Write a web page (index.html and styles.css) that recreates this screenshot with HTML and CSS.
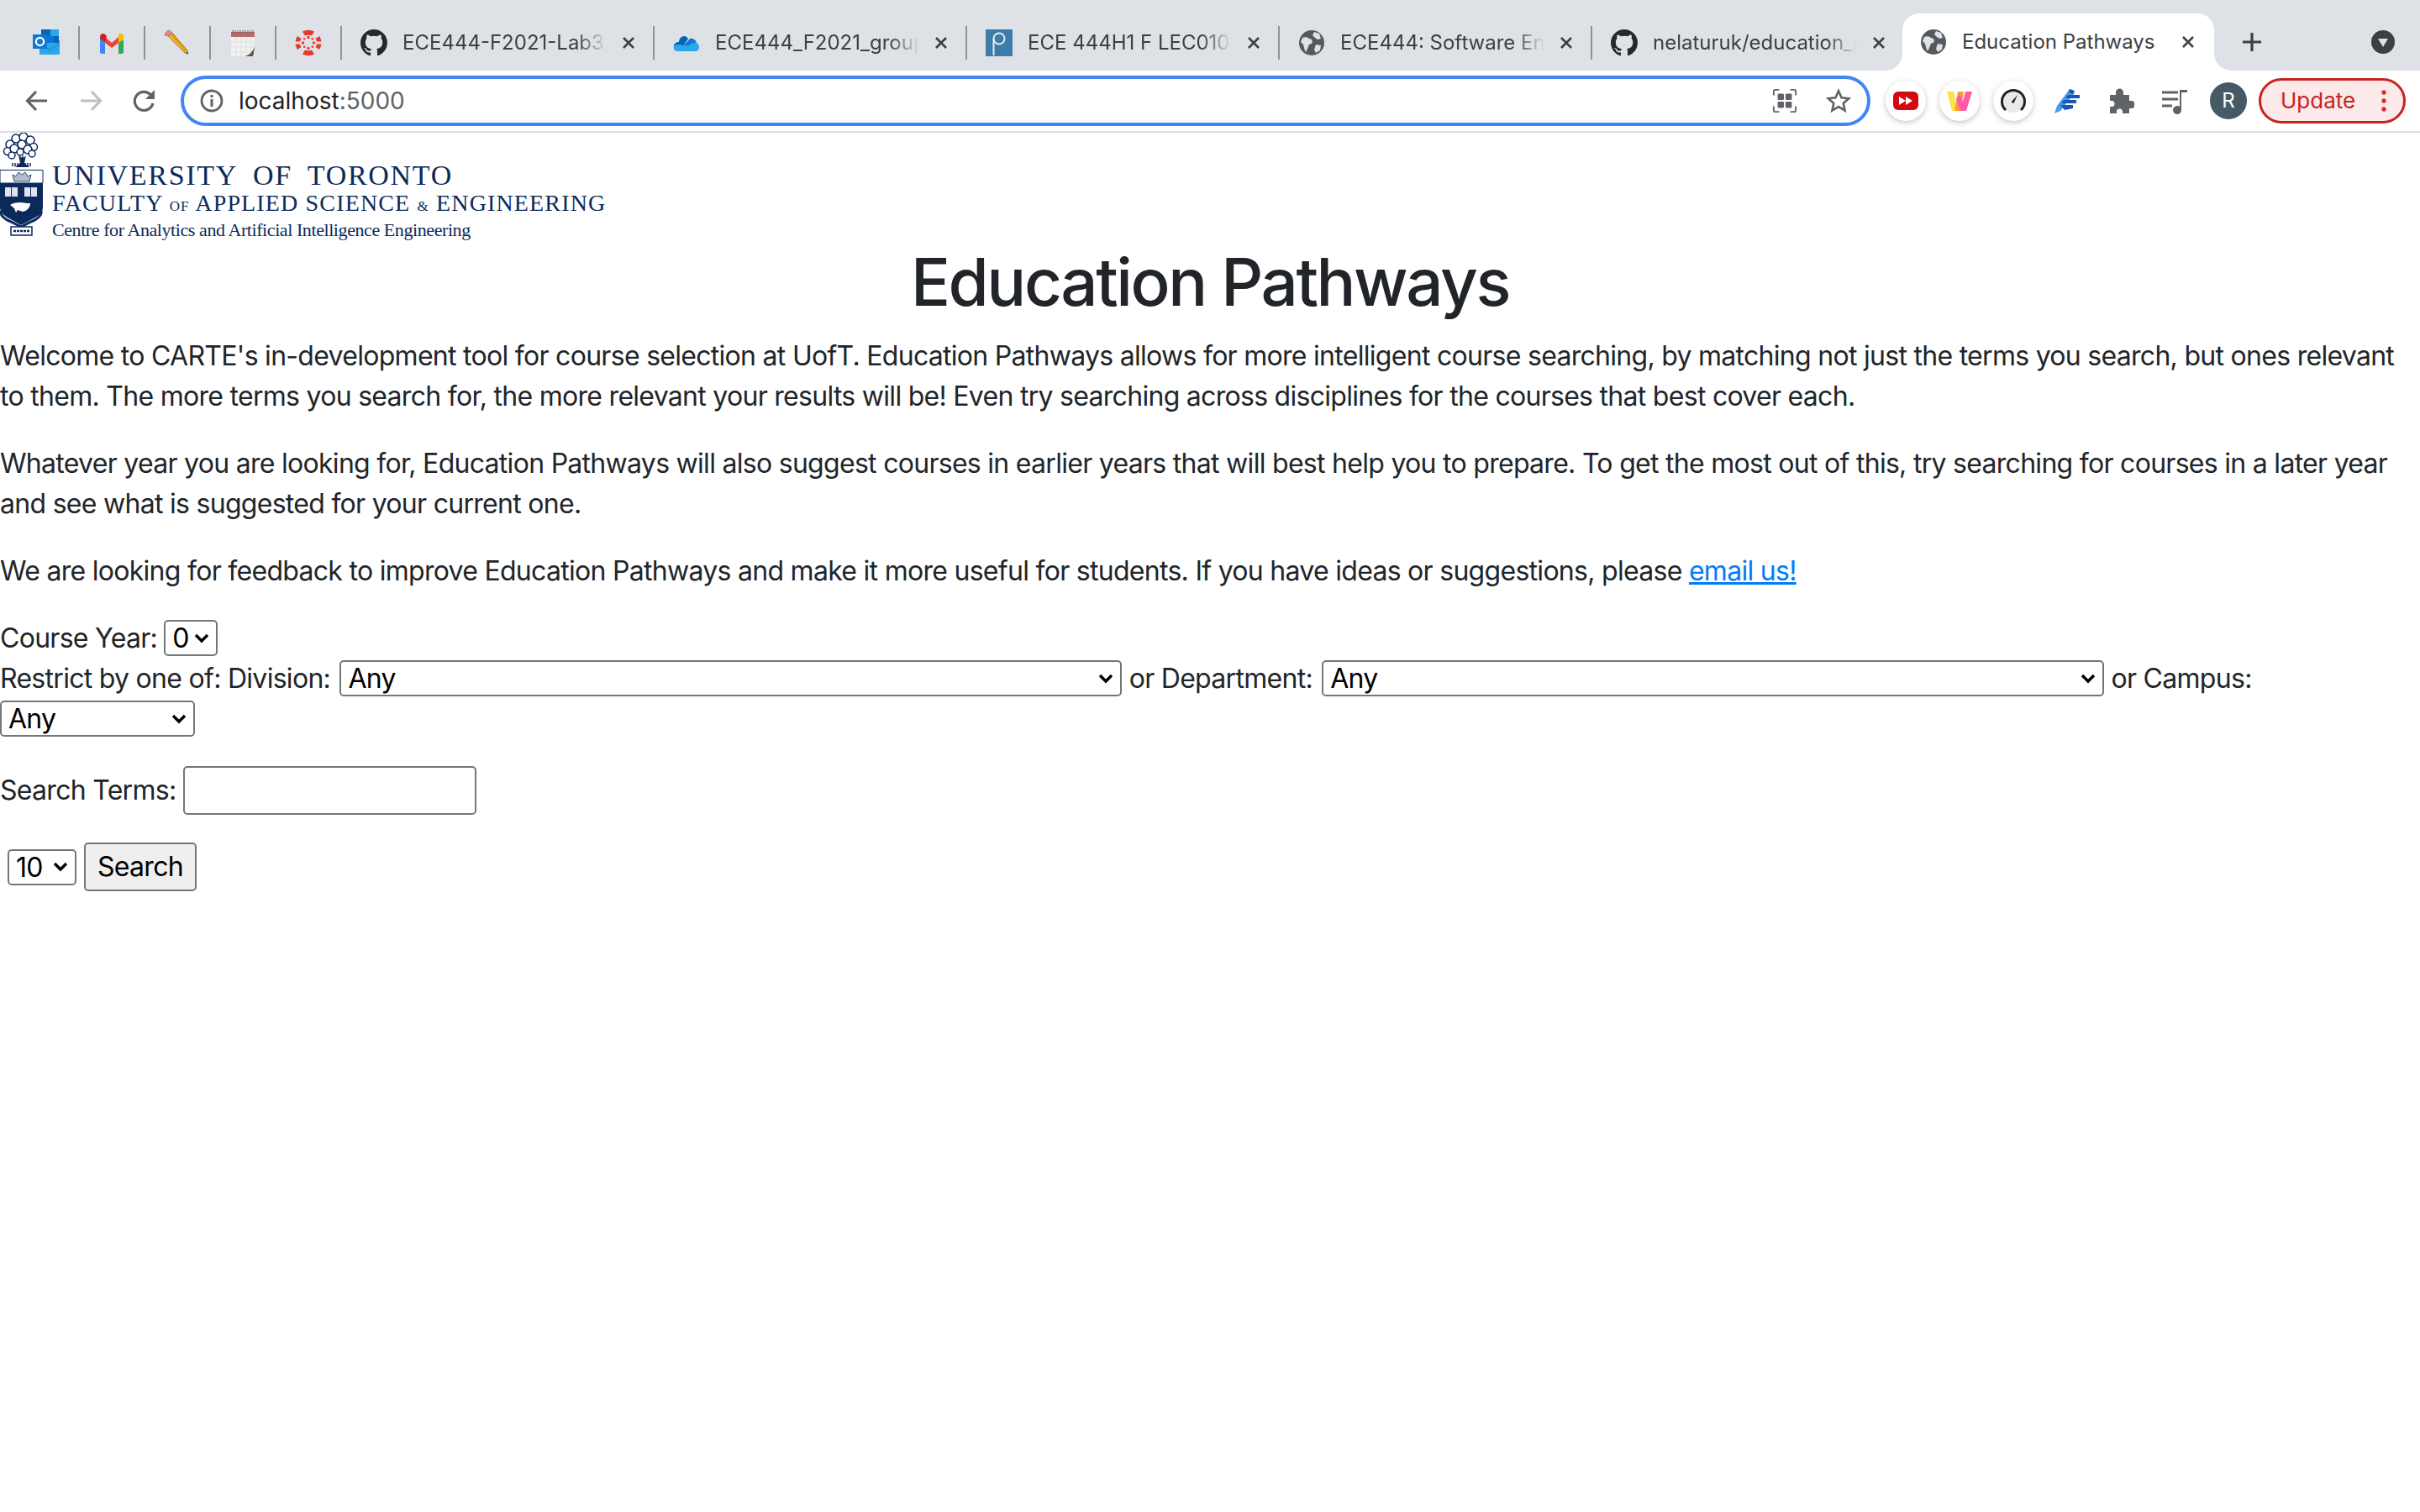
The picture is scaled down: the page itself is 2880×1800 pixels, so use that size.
FILE: index.html
```html
<!DOCTYPE html>
<html lang="en">
<head>
<meta charset="UTF-8">
<meta name="viewport" content="width=device-width, initial-scale=1.0">
<title>Education Pathways</title>
<link rel="stylesheet" href="styles.css">
</head>
<body>

<svg class="defs" width="0" height="0">
  <symbol id="github" viewBox="0 0 16 16"><path fill="#24292f" d="M8 0C3.58 0 0 3.58 0 8c0 3.54 2.29 6.53 5.47 7.59.4.07.55-.17.55-.38 0-.19-.01-.82-.01-1.49-2.01.37-2.53-.49-2.69-.94-.09-.23-.48-.94-.82-1.13-.28-.15-.68-.52-.01-.53.63-.01 1.08.58 1.23.82.72 1.21 1.87.87 2.33.66.07-.52.28-.87.51-1.07-1.78-.2-3.64-.89-3.64-3.95 0-.87.31-1.59.82-2.15-.08-.2-.36-1.02.08-2.12 0 0 .67-.21 2.2.82.64-.18 1.32-.27 2-.27.68 0 1.36.09 2 .27 1.53-1.04 2.2-.82 2.2-.82.44 1.1.16 1.92.08 2.12.51.56.82 1.27.82 2.15 0 3.07-1.87 3.75-3.65 3.95.29.25.54.73.54 1.48 0 1.07-.01 1.93-.01 2.2 0 .21.15.46.55.38A8.013 8.013 0 0016 8c0-4.42-3.58-8-8-8z"/></symbol>
  <symbol id="globe" viewBox="0 0 32 32"><circle cx="16" cy="16" r="15" fill="#55585c"/><path fill="#dee1e6" d="M5 10c3-1 6-1 8 1l3 1 1 4-4 2-2 5-2 4c-2-3-2-6-3-9l-3-3zM19 3l6 2 2 6-4 1-3-2-3-3zM21 18l6 1-1 6-5 3-2-4z"/></symbol>
  <symbol id="close" viewBox="0 0 16 16"><path d="M2 2l12 12M14 2L2 14" stroke="#3c4043" stroke-width="2.6" fill="none"/></symbol>
</svg>

<div class="tabstrip">
  <div class="tab pinned">
    <svg class="favicon" viewBox="0 0 32 32"><path fill="#28a8ea" d="M8 16l24-3v17H8z"/><rect x="10" y="0" width="21" height="16" fill="#0364b8"/><rect x="21" y="0" width="10" height="8" fill="#28a8ea"/><rect x="15" y="8" width="10" height="8" fill="#0078d4"/><path fill="#0a2767" opacity=".35" d="M10 17l10 7 12-8v1l-12 8-10-7z"/><rect x="0" y="6" width="17" height="17" fill="#0f78d4"/><circle cx="8.5" cy="14.500" r="4.600" fill="none" stroke="#fff" stroke-width="2.200"/></svg>
  </div>
  <div class="tab pinned">
    <svg class="favicon" viewBox="0 0 32 32"><path fill="#4285f4" d="M2 9h6v20H4a2 2 0 01-2-2z"/><path fill="#34a853" d="M24 13h6v14a2 2 0 01-2 2h-4z"/><path fill="#ea4335" d="M8 9l8 7 8-7v7l-8 6-8-6z"/><path fill="#c5221f" d="M2 9c0-4 4-5 6-3l2 2-2 7-6-4z"/><path fill="#fbbc04" d="M24 6c3-2 6-1 6 3v3l-6 4z"/></svg>
  </div>
  <div class="tab pinned">
    <svg class="favicon" viewBox="0 0 32 32"><path fill="#f5b82e" stroke="#8a6414" stroke-width=".8" d="M5 8l5-4 18 21 1 4-4-1z"/><path fill="#d99a1c" d="M7.500 6l2.500-2 18 21-2 2z"/><path fill="#e8868a" stroke="#a85a5a" stroke-width=".6" d="M1 7c0-3 3-6 6-6l3 3-5 4z"/><path fill="#333" d="M27.500 27l1.500 2-2.500-.6z"/></svg>
  </div>
  <div class="tab pinned">
    <svg class="favicon" viewBox="0 0 32 32"><rect x="2" y="3" width="28" height="29" fill="#f1f1ef"/><rect x="2" y="3" width="28" height="6" fill="#b96a6a"/><path d="M4 1v4M7 1v4M10 1v4M13 1v4M16 1v4M19 1v4M22 1v4M25 1v4M28 1v4" stroke="#666" stroke-width="1"/><path d="M2 15h28M2 21h28M2 27h28M8 9v23M14 9v23M20 9v23M26 9v23" stroke="#e0e0de" stroke-width="1"/><path fill="#555" d="M18 32c6-1 10-6 12-12-1 6-1 10-2 12z"/></svg>
  </div>
  <div class="tab pinned">
    <svg class="favicon" viewBox="0 0 32 32"><g fill="#e5392c"><path d="M9 2.500a15.500 15.500 0 0114 0l-3 5a10 10 0 00-8 0z"/><path d="M9 29.500a15.500 15.500 0 0014 0l-3-5a10 10 0 01-8 0z"/><path d="M3 8a15.500 15.500 0 00-2.500 6.500H6a10 10 0 011.500-3.500z"/><path d="M29 8a15.500 15.500 0 012.500 6.500H26a10 10 0 00-1.500-3.500z"/><path d="M3 24a15.500 15.500 0 01-2.500-6.500H6a10 10 0 001.500 3.500z"/><path d="M29 24a15.500 15.500 0 002.500-6.500H26a10 10 0 01-1.500 3.500z"/><circle cx="16" cy="9.500" r="1.700"/><circle cx="16" cy="22.500" r="1.700"/><circle cx="9.500" cy="16" r="1.700"/><circle cx="22.500" cy="16" r="1.700"/><circle cx="11.200" cy="11.200" r="1.300"/><circle cx="20.800" cy="11.200" r="1.300"/><circle cx="11.200" cy="20.800" r="1.300"/><circle cx="20.800" cy="20.800" r="1.300"/></g></svg>
  </div>

  <div class="tab">
    <svg class="favicon"><use href="#github"/></svg>
    <span class="tab-title">ECE444-F2021-Lab3/README.md</span>
    <svg class="tab-close"><use href="#close"/></svg>
  </div>
  <div class="tab">
    <svg class="favicon" viewBox="0 0 32 32"><path fill="#0364b8" d="M12 20l6-9c-2-3-5-4-8-2-2 1-3 4-3 6-3 0-6 2-6 5z"/><path fill="#0f78d4" d="M10 22l10-11c3-1 7 1 8 5l-8 6z"/><path fill="#28a8ea" d="M1 20c-1 3 1 6 4 6h21c3 0 5-2 5-5s-2-5-5-5c-4 0-6 4-11 3-5 0-9-3-14 1z"/></svg>
    <span class="tab-title">ECE444_F2021_group_projects</span>
    <svg class="tab-close"><use href="#close"/></svg>
  </div>
  <div class="tab">
    <svg class="favicon" viewBox="0 0 32 32"><rect width="32" height="34" fill="#3d7ba8"/><circle cx="16" cy="11" r="6.500" fill="none" stroke="#e6eef4" stroke-width="2"/><path d="M9.500 11v20" stroke="#e6eef4" stroke-width="2"/></svg>
    <span class="tab-title">ECE 444H1 F LEC0101 Software</span>
    <svg class="tab-close"><use href="#close"/></svg>
  </div>
  <div class="tab">
    <svg class="favicon"><use href="#globe"/></svg>
    <span class="tab-title">ECE444: Software Engineering</span>
    <svg class="tab-close"><use href="#close"/></svg>
  </div>
  <div class="tab tab-last">
    <svg class="favicon"><use href="#github"/></svg>
    <span class="tab-title">nelaturuk/education_pathways</span>
    <svg class="tab-close"><use href="#close"/></svg>
  </div>
  <div class="tab tab-active">
    <svg class="favicon"><use href="#globe"/></svg>
    <span class="tab-title">Education Pathways</span>
    <svg class="tab-close"><use href="#close"/></svg>
  </div>

  <svg class="new-tab" viewBox="0 0 24 24"><path d="M12 1v22M1 12h22" stroke="#3c4043" stroke-width="3.200"/></svg>
  <svg class="tab-search" viewBox="0 0 28 28"><circle cx="14" cy="14" r="14" fill="#3c4043"/><path d="M8 10h12l-6 10z" fill="#dee1e6"/></svg>
</div>

<div class="toolbar">
  <div class="slot">
    <svg class="tool-icon" viewBox="0 0 28 28"><path d="M26 14H3M13 3L2.500 14 13 25" fill="none" stroke="#5f6368" stroke-width="3.200"/></svg>
  </div>
  <div class="slot">
    <svg class="tool-icon" viewBox="0 0 28 28"><path d="M2 14h23M15 3l10.500 11L15 25" fill="none" stroke="#bdc1c6" stroke-width="3.200"/></svg>
  </div>
  <div class="slot">
    <svg class="tool-icon" viewBox="0 0 28 28"><path d="M24 17a11 11 0 11-3-10.500" fill="none" stroke="#5f6368" stroke-width="3.200"/><path d="M26 1v11H15z" fill="#5f6368"/></svg>
  </div>

  <div class="omnibox">
    <svg class="info-icon" viewBox="0 0 28 28"><circle cx="14" cy="14" r="12" fill="none" stroke="#5f6368" stroke-width="2.800"/><path d="M12.500 12h3v9h-3zM12.500 7h3v3h-3z" fill="#5f6368"/></svg>
    <span class="url">localhost<span class="url-port">:5000</span></span>
    <svg class="omni-icon omni-grid" viewBox="0 0 32 32"><g fill="#5f6368"><rect x="7" y="7" width="8" height="8" rx="1.500"/><rect x="17" y="7" width="8" height="8" rx="1.500"/><rect x="7" y="17" width="8" height="8" rx="1.500"/><rect x="17" y="17" width="8" height="8" rx="1.500"/></g><path d="M2 9V4a2 2 0 012-2h5M23 2h5a2 2 0 012 2v5M30 23v5a2 2 0 01-2 2h-5M9 30H4a2 2 0 01-2-2v-5" fill="none" stroke="#5f6368" stroke-width="2"/></svg>
    <svg class="omni-icon omni-star" viewBox="0 0 32 32"><path d="M16 3.500l3.800 8.500 9.200 1-6.900 6.200 2 9.100-8.100-4.700-8.100 4.700 2-9.100L3 13l9.200-1z" fill="none" stroke="#5f6368" stroke-width="2.800"/></svg>
  </div>

  <div class="slot first-ext">
    <div class="ext-circle">
      <svg class="ext-icon" viewBox="0 0 32 32"><rect x="1" y="5" width="30" height="22" rx="6" fill="#d3090f"/><path d="M8 11l8 5-8 5zM16 11l8 5-8 5z" fill="#fff"/></svg>
    </div>
  </div>
  <div class="slot">
    <div class="ext-circle">
      <svg class="ext-icon" viewBox="0 0 32 32"><path fill="#fde24f" d="M1 5h8l5 23H7z"/><path fill="#ff9a2e" d="M14 5h7l-4 23h-7z"/><path fill="#ff5aa8" d="M12 13l5 15h7l7-23h-8l-3 12-3-8z"/></svg>
    </div>
  </div>
  <div class="slot">
    <div class="ext-circle">
      <svg class="ext-icon" viewBox="0 0 32 32"><circle cx="16" cy="16" r="14" fill="#e8eae6"/><path d="M7 27A13.500 13.500 0 1125 27" fill="none" stroke="#202124" stroke-width="3"/><path d="M13.500 17.500L21 9l-4.500 10z" fill="#202124"/></svg>
    </div>
  </div>
  <div class="slot">
    <svg class="tool-icon-lg" viewBox="0 0 32 32"><path fill="#4a9de8" d="M1 31l3-9L19 2l6 5-17 21z"/><path fill="#1a56b8" d="M19 2l6 2-2 4-5-2zM17 9h14v4H14zM12 15h15v4H9zM8 21h15v4l-10 2z"/></svg>
  </div>
  <div class="slot">
    <svg class="tool-icon-lg" viewBox="0 0 32 32"><path fill="#5f6368" d="M3 9h7V6a4.500 4.500 0 019 0v3h7v7h2.500a4.500 4.500 0 010 9H26v6h-8v-2a3.500 3.500 0 00-7 0v2H3v-8h2a3.500 3.500 0 000-7H3z"/></svg>
  </div>
  <div class="slot">
    <svg class="tool-icon-lg" viewBox="0 0 32 32"><path d="M1 6h19M1 14h19M1 22h12" stroke="#5f6368" stroke-width="3"/><path d="M24 6h7v-3h-9v20a5 5 0 102 4z" fill="#5f6368"/></svg>
  </div>
  <div class="slot">
    <div class="avatar">R</div>
  </div>
  <div class="update-pill">
    <span class="update-label">Update</span>
    <svg class="update-dots" viewBox="0 0 6 26"><circle cx="3" cy="3" r="2.700"/><circle cx="3" cy="13" r="2.700"/><circle cx="3" cy="23" r="2.700"/></svg>
  </div>
</div>

<div class="logo">
  <svg class="crest" viewBox="0 0 52 124">
    <g fill="#fff" stroke="#0b2a5b" stroke-width="1.500">
      <circle cx="12" cy="14" r="5"/><circle cx="19" cy="7" r="5"/><circle cx="28" cy="5" r="5"/><circle cx="36" cy="9" r="5"/><circle cx="40" cy="17" r="4.500"/>
      <circle cx="9" cy="22" r="4.500"/><circle cx="17" cy="19" r="5"/><circle cx="26" cy="14" r="5"/><circle cx="33" cy="20" r="5"/><circle cx="38" cy="25" r="4"/><circle cx="14" cy="27" r="4"/><circle cx="24" cy="23" r="4"/>
    </g>
    <path d="M22 26l2 10-6 5h17l-6-5 2-9-3 3-1-5-1 5z" fill="#0b2a5b"/>
    <path d="M0 44.500h51V60H0z" fill="#fff" stroke="#0b2a5b"/>
    <path d="M14 37h24M14 39h24" stroke="#0b2a5b" stroke-width="1.500" stroke-dasharray="2 1"/>
    <path d="M0 60h51v29c0 10-14 14-26 21C14 103 0 99 0 89z" fill="#0b2a5b"/>
    <path d="M17 58h18l2-8-4 2-3-5-4 3-4-3-3 5-4-2z" fill="#b3bccb" stroke="#0b2a5b" stroke-width=".8"/>
    <path d="M6 65h15v11H6zM29 65h15v11H29z" fill="#dfe4ec"/>
    <path d="M13.500 65v11M36.500 65v11" stroke="#0b2a5b"/>
    <path d="M12 86c4-3 12-4 20-2 3 0 4-1 4 1-1 5-4 8-9 9l-6-2-2 3-2-5z" fill="#fff"/>
    <path d="M1 93c-1 5 4 10 12 13l12 6 12-6c8-3 13-8 12-13" fill="none" stroke="#0b2a5b" stroke-width="3"/>
    <rect x="13" y="112" width="25" height="10" fill="#fff" stroke="#0b2a5b" stroke-width="1.500"/>
    <path d="M16 117h19" stroke="#0b2a5b" stroke-width="2.500" stroke-dasharray="3 1"/>
  </svg>
  <div class="logo-text">
    <div class="logo-uni">UNIVERSITY<span class="logo-gap"></span>OF<span class="logo-gap"></span>TORONTO</div>
    <div class="logo-faculty">FACULTY <span class="logo-small">OF</span> APPLIED SCIENCE <span class="logo-small">&amp;</span> ENGINEERING</div>
    <div class="logo-centre">Centre for Analytics and Artificial Intelligence Engineering</div>
  </div>
</div>

<h1 class="page-title">Education Pathways</h1>

<p>Welcome to CARTE's in-development tool for course selection at UofT. Education Pathways allows for more intelligent course searching, by matching not just the terms you search, but ones relevant to them. The more terms you search for, the more relevant your results will be! Even try searching across disciplines for the courses that best cover each.</p>

<p>Whatever year you are looking for, Education Pathways will also suggest courses in earlier years that will best help you to prepare. To get the most out of this, try searching for courses in a later year and see what is suggested for your current one.</p>

<p>We are looking for feedback to improve Education Pathways and make it more useful for students. If you have ideas or suggestions, please <a href="#">email us!</a></p>

<form class="search-form">
  <div class="filters">
    <label for="year">Course Year:</label>
    <select id="year" class="sel sel-year"><option>0</option></select>
    <br>
    <label for="division">Restrict by one of: Division:</label>
    <select id="division" class="sel sel-wide"><option>Any</option></select>
    <label for="department">or Department:</label>
    <select id="department" class="sel sel-wide"><option>Any</option></select>
    <label for="campus">or Campus:</label>
    <select id="campus" class="sel sel-campus"><option>Any</option></select>
  </div>
  <div class="terms">
    <label for="terms">Search Terms:</label>
    <input id="terms" class="terms-input" type="text">
  </div>
  <div class="submit-row">
    <select class="sel sel-count"><option>10</option></select>
    <button class="search-btn" type="button">Search</button>
  </div>
</form>

</body>
</html>
```

FILE: styles.css
```css
body {
  margin: 0;
  background-color: #fff;
  color: #212529;
  font-family: Inter, "Liberation Sans", sans-serif;
  font-size: 32px;
  line-height: 48px;
  letter-spacing: -0.71px;
}

.defs {
  display: block;
  height: 0;
}

/* browser chrome */
.tabstrip {
  display: flex;
  align-items: flex-start;
  height: 84px;
  padding: 31px 0 0 17px;
  box-sizing: border-box;
  background-color: #dee1e6;
  letter-spacing: 0;
}

.tab {
  display: flex;
  align-items: center;
  flex: none;
  box-sizing: border-box;
  width: 372px;
  height: 40px;
  padding-left: 22px;
  border-right: 2px solid #909296;
}

.tab.pinned {
  width: 78px;
  padding-left: 22px;
}

.tab-last {
  border-right: none;
  width: 369px;
}

.tab-active {
  position: relative;
  width: 371px;
  height: 68px;
  margin-top: -15px;
  padding-left: 21px;
  border-right: none;
  border-radius: 20px 20px 0 0;
  background-color: #fff;
}

.tab-active::before,
.tab-active::after {
  content: "";
  position: absolute;
  bottom: 0;
  width: 20px;
  height: 20px;
}

.tab-active::before {
  left: -20px;
  background: radial-gradient(circle at 0 0, #dee1e6 19.500px, #fff 20px);
}

.tab-active::after {
  right: -20px;
  background: radial-gradient(circle at 100% 0, #dee1e6 19.500px, #fff 20px);
}

.favicon {
  flex: none;
  width: 32px;
  height: 32px;
}

.tab-title {
  flex: none;
  width: 243px;
  margin-left: 18px;
  overflow: hidden;
  color: #3c4043;
  font-size: 24px;
  line-height: 32px;
  white-space: nowrap;
  -webkit-mask-image: linear-gradient(to right, #000 85%, transparent 100%);
  mask-image: linear-gradient(to right, #000 85%, transparent 100%);
}

.tab-active .tab-title {
  -webkit-mask-image: none;
  mask-image: none;
}

.tab-close {
  flex: none;
  width: 16px;
  height: 16px;
  margin-left: 18px;
}

.new-tab {
  flex: none;
  width: 24px;
  height: 24px;
  margin: 7px 0 0 33px;
}

.tab-search {
  flex: none;
  width: 28px;
  height: 28px;
  margin: 5px 0 0 130px;
}

.toolbar {
  display: flex;
  align-items: center;
  height: 72px;
  padding-left: 12px;
  box-sizing: content-box;
  background-color: #fff;
  border-bottom: 2px solid #dadce0;
  letter-spacing: 0;
}

.slot {
  display: flex;
  align-items: center;
  justify-content: center;
  flex: none;
  width: 64px;
  height: 72px;
}

.tool-icon {
  width: 28px;
  height: 28px;
}

.tool-icon-lg {
  width: 32px;
  height: 32px;
}

.omnibox {
  display: flex;
  align-items: center;
  flex: none;
  box-sizing: border-box;
  width: 2011px;
  height: 60px;
  margin-left: 11px;
  padding-left: 19px;
  border: 4px solid #4285f4;
  border-radius: 30px;
}

.info-icon {
  flex: none;
  width: 28px;
  height: 28px;
}

.url {
  margin-left: 18px;
  color: #202124;
  font-size: 28px;
  line-height: 36px;
}

.url-port {
  color: #5f6368;
}

.omni-icon {
  flex: none;
  width: 30px;
  height: 30px;
}

.omni-grid {
  margin-left: auto;
}

.omni-star {
  margin: 0 19px 0 34px;
}

.first-ext {
  margin-left: 10px;
}

.ext-circle {
  display: flex;
  align-items: center;
  justify-content: center;
  width: 48px;
  height: 48px;
  border-radius: 50%;
  background-color: #fff;
  box-shadow: 0 2px 6px rgba(60, 64, 67, 0.3);
}

.ext-icon {
  width: 32px;
  height: 32px;
}

.avatar {
  width: 44px;
  height: 44px;
  border-radius: 50%;
  background-color: #455a64;
  color: #fff;
  font-size: 24px;
  line-height: 44px;
  text-align: center;
}

.update-pill {
  display: flex;
  align-items: center;
  flex: none;
  box-sizing: border-box;
  width: 175px;
  height: 54px;
  margin-left: 4px;
  padding-left: 23px;
  border: 3px solid #c5221f;
  border-radius: 27px;
  background-color: #fbeae9;
  color: #c5221f;
  font-size: 26px;
  line-height: 32px;
}

.update-dots {
  width: 6px;
  height: 26px;
  margin-left: 31px;
  fill: #d93025;
}

/* page */
.logo {
  display: flex;
  height: 130px;
}

.crest {
  flex: none;
  width: 52px;
  height: 124px;
}

.logo-text {
  margin: 33px 0 0 10px;
  color: #0b2a5b;
  font-family: "Liberation Serif", serif;
  letter-spacing: 0;
}

.logo-uni {
  font-size: 34px;
  line-height: 36px;
  letter-spacing: 1.7px;
}

.logo-gap {
  display: inline-block;
  width: 18px;
}

.logo-faculty {
  font-size: 28px;
  line-height: 29px;
  letter-spacing: 1.15px;
}

.logo-small {
  font-size: 17px;
}

.logo-centre {
  font-size: 22px;
  line-height: 27px;
  letter-spacing: -0.42px;
}

.page-title {
  margin: 0 0 16px;
  font-size: 78px;
  font-weight: 500;
  line-height: 96px;
  text-align: center;
  letter-spacing: -2.4px;
}

p {
  margin: 0 0 32px;
}

a {
  color: #007bff;
}

.sel {
  box-sizing: border-box;
  height: 43px;
  margin: 0;
  padding: 0 0 0 8px;
  border: 2px solid #767676;
  border-radius: 5px;
  background: #fff url("data:image/svg+xml,%3Csvg xmlns='http://www.w3.org/2000/svg' viewBox='0 0 18 12'%3E%3Cpath d='M2 2l7 7 7-7' fill='none' stroke='%23000' stroke-width='3.400'/%3E%3C/svg%3E") no-repeat right 8px center / 18px 12px;
  color: #000;
  font: inherit;
  line-height: 39px;
  letter-spacing: inherit;
  -webkit-appearance: none;
  appearance: none;
}

.sel-year {
  width: 64px;
}

.sel-wide {
  width: 931px;
  margin-left: 3px;
}

.sel-campus {
  width: 232px;
}

.sel-count {
  width: 82px;
}

.terms {
  margin-top: 31px;
  line-height: 60px;
}

.terms-input {
  box-sizing: border-box;
  width: 349px;
  height: 58px;
  border: 2px solid #767676;
  border-radius: 5px;
  font: inherit;
  line-height: 54px;
}

.submit-row {
  display: flex;
  align-items: center;
  gap: 9px;
  margin-top: 32px;
  padding-left: 9px;
}

.search-btn {
  box-sizing: border-box;
  width: 134px;
  height: 58px;
  padding: 0;
  border: 2px solid #767676;
  border-radius: 5px;
  background-color: #efefef;
  color: #000;
  font: inherit;
  line-height: 54px;
  letter-spacing: inherit;
}
```
